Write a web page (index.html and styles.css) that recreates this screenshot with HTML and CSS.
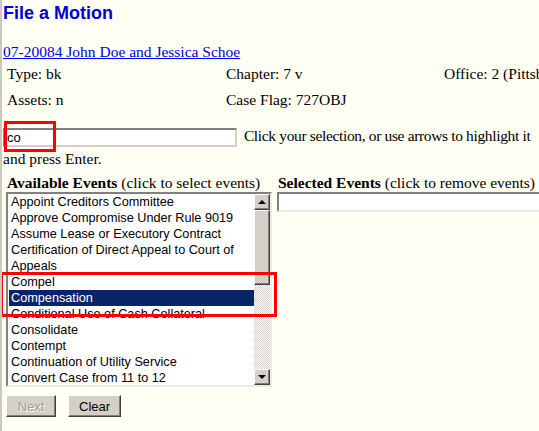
FILE: index.html
```html
<!DOCTYPE html>
<html lang="en">
<head>
    <meta charset="UTF-8">
    <title>File a Motion</title>
    <link rel="stylesheet" href="styles.css">
</head>
<body>
    <div class="page">
        <h1 class="title">File a Motion</h1>

        <a class="case-link" href="#">07-20084 John Doe and Jessica Schoe</a>

        <div class="case-info">
            <span>Type: bk</span>
            <span>Chapter: 7 v</span>
            <span>Office: 2 (Pittsburgh)</span>
            <span>Assets: n</span>
            <span>Case Flag: 727OBJ</span>
            <span></span>
        </div>

        <div class="search">
            <input class="search-box" type="text" value="co">
            <span class="hint">Click your selection, or use arrows to highlight it</span><br>and press Enter.
            <span class="mark mark-search"></span>
        </div>

        <div class="events">
            <div class="event-col available">
                <div class="event-label"><b>Available Events</b> (click to select events)</div>
                <div class="listbox">
                    <ul class="options">
                        <li>Appoint Creditors Committee</li>
                        <li>Approve Compromise Under Rule 9019</li>
                        <li>Assume Lease or Executory Contract</li>
                        <li>Certification of Direct Appeal to Court of</li>
                        <li>Appeals</li>
                        <li>Compel</li>
                        <li class="selected">Compensation</li>
                        <li>Conditional Use of Cash Collateral</li>
                        <li>Consolidate</li>
                        <li>Contempt</li>
                        <li>Continuation of Utility Service</li>
                        <li>Convert Case from 11 to 12</li>
                    </ul>
                    <div class="scrollbar">
                        <div class="sb-btn"><span class="arrow up"></span></div>
                        <div class="sb-thumb"></div>
                        <div class="sb-track"></div>
                        <div class="sb-btn"><span class="arrow down"></span></div>
                    </div>
                </div>
                <span class="mark mark-list"></span>
            </div>
            <div class="event-col chosen">
                <div class="event-label"><b>Selected Events</b> (click to remove events)</div>
                <div class="listbox empty"></div>
            </div>
        </div>

        <div class="actions">
            <button disabled>Next</button>
            <button>Clear</button>
        </div>
    </div>
</body>
</html>
```

FILE: styles.css
```css
html, body {
    margin: 0;
    height: 100%;
    overflow: hidden;
}
body {
    background: #fffff3;
    font-family: "Liberation Serif", "Times New Roman", serif;
    font-size: 15.5px;
    color: #000;
    border-left: 2px solid #c9c9c0;
    box-sizing: border-box;
}
.page {
    position: relative;
    padding: 0 0 0 1px;
    width: 600px;
}
.title {
    font-family: "Liberation Sans", Arial, sans-serif;
    font-size: 18px;
    font-weight: bold;
    color: #0000cc;
    margin: 2px 0 0 0;
    line-height: 22px;
}
.case-link {
    display: inline-block;
    margin-top: 19px;
    color: #0000ee;
    line-height: 18px;
}
.case-info {
    display: grid;
    grid-template-columns: 219px 218px auto;
    row-gap: 8px;
    padding: 4px 0 0 4px;
    white-space: nowrap;
    line-height: 18px;
}
.search {
    position: relative;
    margin-top: 15px;
    white-space: nowrap;
    line-height: 23px;
}
.hint {
    letter-spacing: -0.35px;
}
.search-box {
    width: 234px;
    height: 19px;
    box-sizing: border-box;
    margin: 0 3px 0 0;
    padding: 1px 2px;
    font-family: "Liberation Sans", Arial, sans-serif;
    font-size: 13px;
    background: #fff;
    border: 2px solid;
    border-color: #808080 #d4d0c8 #d4d0c8 #808080;
    vertical-align: -1px;
}
.mark {
    position: absolute;
    border: 3px solid #f00;
    box-sizing: border-box;
}
.mark-search {
    left: 1px;
    top: -3px;
    width: 52px;
    height: 31px;
}
.events {
    display: flex;
    gap: 5px;
    margin-top: 4px;
    padding-left: 3px;
}
.event-col {
    position: relative;
}
.available {
    width: 266px;
}
.chosen {
    flex: 1;
}
.event-label {
    white-space: nowrap;
    line-height: 18px;
    padding-left: 1px;
}
.listbox {
    display: flex;
    background: #fff;
    border: 2px solid;
    border-color: #808080 #ecebe6 #ecebe6 #808080;
    height: 195px;
    box-sizing: border-box;
}
.listbox.empty {
    height: 20px;
}
.options {
    list-style: none;
    margin: 0;
    padding: 0 0 0 1px;
    flex: 1;
    font-family: "Liberation Sans", Arial, sans-serif;
    font-size: 12.7px;
    line-height: 16px;
    overflow: hidden;
}
.options li {
    padding-left: 2px;
    white-space: nowrap;
}
.options .selected {
    background: #0a246a;
    color: #fff;
}
.scrollbar {
    width: 16px;
    display: flex;
    flex-direction: column;
}
.sb-btn, .sb-thumb {
    background: #d4d0c8;
    border: 1px solid;
    border-color: #fff #404040 #404040 #fff;
    box-shadow: inset -1px -1px 0 #808080;
    box-sizing: border-box;
}
.sb-btn {
    height: 16px;
    display: flex;
    align-items: center;
    justify-content: center;
}
.sb-thumb {
    height: 75px;
}
.sb-track {
    flex: 1;
    background-color: #fff;
    background-image: repeating-conic-gradient(#d4d0c8 0 25%, #fff 0 50%);
    background-size: 2px 2px;
}
.arrow {
    width: 0;
    height: 0;
    border-left: 4px solid transparent;
    border-right: 4px solid transparent;
}
.arrow.up {
    border-bottom: 4px solid #000;
}
.arrow.down {
    border-top: 4px solid #000;
}
.mark-list {
    left: -6px;
    top: 98px;
    width: 277px;
    height: 45px;
}
.actions {
    display: flex;
    gap: 12px;
    padding: 8px 0 0 3px;
}
.actions button {
    font-family: "Liberation Sans", Arial, sans-serif;
    font-size: 13px;
    height: 22px;
    padding: 0 10px;
    background: #d4d0c8;
    color: #000;
    border: 1px solid;
    border-color: #fff #404040 #404040 #fff;
    box-shadow: inset -1px -1px 0 #808080;
}
.actions button:first-child {
    width: 50px;
}
.actions button:disabled {
    color: #a09d96;
    text-shadow: 1px 1px 0 #fff;
}
```
